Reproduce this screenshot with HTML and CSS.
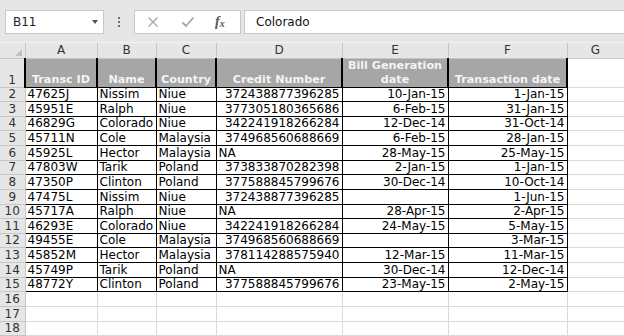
FILE: index.html
```html
<!DOCTYPE html>
<html>
<head>
<meta charset="utf-8">
<link rel="stylesheet" href="styles.css">
</head>
<body>
<div class="app">
  <div class="toolbar">
    <div class="namebox"><span>B11</span><span class="caret"></span></div>
    <div class="dots"><i></i><i></i><i></i></div>
    <div class="fbtns">
      <svg class="ico" width="12" height="12" viewBox="0 0 12 12"><path d="M1.5 1.5 L10.5 10.5 M10.5 1.5 L1.5 10.5" stroke="#a6a6a6" stroke-width="1.3" fill="none"/></svg>
      <svg class="ico" width="14" height="12" viewBox="0 0 14 12"><path d="M1.5 6.5 L5 10 L12.5 1.5" stroke="#a6a6a6" stroke-width="1.8" fill="none"/></svg>
      <span class="fx">f<sub>x</sub></span>
    </div>
    <div class="finput">Colorado</div>
  </div>
  <table class="sheet">
    <colgroup>
      <col class="c-rn"><col class="c-a"><col class="c-b"><col class="c-c"><col class="c-d"><col class="c-e"><col class="c-f"><col class="c-g">
    </colgroup>
    <tr class="colhead">
      <th class="corner"><span class="tri"></span></th><th>A</th><th>B</th><th>C</th><th>D</th><th>E</th><th>F</th><th>G</th>
    </tr>
    <tr class="r-head">
      <td class="rn">1</td><td class="h">Transc ID</td><td class="h">Name</td><td class="h">Country</td><td class="h">Credit Number</td><td class="h">Bill Generation date</td><td class="h">Transaction date</td><td></td>
    </tr>
    <tr><td class="rn">2</td><td class="b">47625J</td><td class="b">Nissim</td><td class="b">Niue</td><td class="b r">372438877396285</td><td class="b r">10-Jan-15</td><td class="b r">1-Jan-15</td><td></td></tr>
    <tr><td class="rn">3</td><td class="b">45951E</td><td class="b">Ralph</td><td class="b">Niue</td><td class="b r">377305180365686</td><td class="b r">6-Feb-15</td><td class="b r">31-Jan-15</td><td></td></tr>
    <tr><td class="rn">4</td><td class="b">46829G</td><td class="b">Colorado</td><td class="b">Niue</td><td class="b r">342241918266284</td><td class="b r">12-Dec-14</td><td class="b r">31-Oct-14</td><td></td></tr>
    <tr><td class="rn">5</td><td class="b">45711N</td><td class="b">Cole</td><td class="b">Malaysia</td><td class="b r">374968560688669</td><td class="b r">6-Feb-15</td><td class="b r">28-Jan-15</td><td></td></tr>
    <tr><td class="rn">6</td><td class="b">45925L</td><td class="b">Hector</td><td class="b">Malaysia</td><td class="b">NA</td><td class="b r">28-May-15</td><td class="b r">25-May-15</td><td></td></tr>
    <tr><td class="rn">7</td><td class="b">47803W</td><td class="b">Tarik</td><td class="b">Poland</td><td class="b r">373833870282398</td><td class="b r">2-Jan-15</td><td class="b r">1-Jan-15</td><td></td></tr>
    <tr><td class="rn">8</td><td class="b">47350P</td><td class="b">Clinton</td><td class="b">Poland</td><td class="b r">377588845799676</td><td class="b r">30-Dec-14</td><td class="b r">10-Oct-14</td><td></td></tr>
    <tr><td class="rn">9</td><td class="b">47475L</td><td class="b">Nissim</td><td class="b">Niue</td><td class="b r">372438877396285</td><td class="b r"></td><td class="b r">1-Jun-15</td><td></td></tr>
    <tr><td class="rn">10</td><td class="b">45717A</td><td class="b">Ralph</td><td class="b">Niue</td><td class="b">NA</td><td class="b r">28-Apr-15</td><td class="b r">2-Apr-15</td><td></td></tr>
    <tr><td class="rn">11</td><td class="b">46293E</td><td class="b">Colorado</td><td class="b">Niue</td><td class="b r">342241918266284</td><td class="b r">24-May-15</td><td class="b r">5-May-15</td><td></td></tr>
    <tr><td class="rn">12</td><td class="b">49455E</td><td class="b">Cole</td><td class="b">Malaysia</td><td class="b r">374968560688669</td><td class="b r"></td><td class="b r">3-Mar-15</td><td></td></tr>
    <tr><td class="rn">13</td><td class="b">45852M</td><td class="b">Hector</td><td class="b">Malaysia</td><td class="b r">378114288575940</td><td class="b r">12-Mar-15</td><td class="b r">11-Mar-15</td><td></td></tr>
    <tr><td class="rn">14</td><td class="b">45749P</td><td class="b">Tarik</td><td class="b">Poland</td><td class="b">NA</td><td class="b r">30-Dec-14</td><td class="b r">12-Dec-14</td><td></td></tr>
    <tr><td class="rn">15</td><td class="b">48772Y</td><td class="b">Clinton</td><td class="b">Poland</td><td class="b r">377588845799676</td><td class="b r">23-May-15</td><td class="b r">2-May-15</td><td></td></tr>
    <tr><td class="rn">16</td><td></td><td></td><td></td><td></td><td></td><td></td><td></td></tr>
    <tr><td class="rn">17</td><td></td><td></td><td></td><td></td><td></td><td></td><td></td></tr>
    <tr><td class="rn">18</td><td></td><td></td><td></td><td></td><td></td><td></td><td></td></tr>
  </table>
</div>
</body>
</html>
```

FILE: styles.css
```css
html, body {
  margin: 0;
  padding: 0;
  background: #ffffff;
  overflow: hidden;
}
.app {
  width: 624px;
  height: 336px;
  overflow: hidden;
  font-family: "DejaVu Sans", Verdana, sans-serif;
  font-size: 12px;
  color: #000;
}
.toolbar {
  height: 43px;
  background: #e6e6e6;
  display: flex;
  align-items: flex-start;
  padding-top: 10px;
  box-sizing: border-box;
  border-bottom: 1px solid #f2f2f2;
}
.namebox {
  margin-left: 5px;
  width: 99px;
  height: 24px;
  box-sizing: border-box;
  background: #fff;
  border: 1px solid #c8c8c8;
  display: flex;
  align-items: center;
  justify-content: space-between;
  padding: 0 5px 0 7px;
  font-size: 12px;
  color: #222;
}
.caret {
  width: 0;
  height: 0;
  border-left: 3.5px solid transparent;
  border-right: 3.5px solid transparent;
  border-top: 4px solid #555;
}
.dots {
  width: 30px;
  height: 24px;
  display: flex;
  flex-direction: column;
  align-items: center;
  justify-content: center;
  gap: 2px;
}
.dots i {
  display: block;
  width: 2px;
  height: 2px;
  background: #6f6f6f;
}
.fbtns {
  width: 107px;
  height: 24px;
  box-sizing: border-box;
  background: #fff;
  border: 1px solid #c8c8c8;
  display: flex;
  align-items: center;
  padding-left: 12px;
  gap: 0;
}
.fbtns .ico:first-child { margin-right: 22px; }
.fbtns .ico:nth-child(2) { margin-right: 20px; }
.fx {
  font-family: "Liberation Serif", serif;
  font-style: italic;
  font-size: 14px;
  color: #555;
  font-weight: bold;
  line-height: 1;
}
.fx sub {
  font-size: 10px;
  vertical-align: baseline;
  position: relative;
  top: 1px;
}
.finput {
  margin-left: 3px;
  flex: 1;
  height: 24px;
  box-sizing: border-box;
  background: #fff;
  border: 1px solid #c8c8c8;
  border-right: none;
  padding-left: 11px;
  display: flex;
  align-items: center;
  font-size: 12px;
  color: #111;
}
.sheet {
  border-collapse: collapse;
  table-layout: fixed;
  width: 624px;
}
.c-rn { width: 25px; }
.c-a { width: 72px; }
.c-b { width: 59px; }
.c-c { width: 60px; }
.c-d { width: 126px; }
.c-e { width: 106px; }
.c-f { width: 119px; }
.c-g { width: 57px; }
.sheet td, .sheet th {
  padding: 0 2px;
  border: 1px solid #dadada;
  white-space: nowrap;
  overflow: hidden;
  line-height: 13px;
  vertical-align: bottom;
  text-align: left;
  font-weight: normal;
}
.sheet tr { height: 14.64px; }
.colhead { height: 15px !important; }
.colhead th {
  background: #e6e6e6;
  color: #333;
  text-align: center;
  border-color: #c6c6c6;
  border-top: none;
  vertical-align: middle;
  font-size: 12px;
}
.colhead th.corner {
  position: relative;
  border-left: none;
}
.tri {
  position: absolute;
  right: 3px;
  bottom: 2px;
  width: 0;
  height: 0;
  border-left: 7px solid transparent;
  border-bottom: 7px solid #c0c0c0;
}
.sheet td.rn {
  background: #e6e6e6;
  color: #333;
  text-align: center;
  border-color: #c6c6c6;
  border-left: none;
  padding: 0;
}
.r-head { height: 29px !important; }
.sheet td.h {
  background: #a6a6a6;
  color: #f4f4f4;
  font-weight: bold;
  font-size: 11.2px;
  text-align: center;
  white-space: normal;
  line-height: 14px;
  border: 1px solid #000;
  border-left: 2px solid #000;
  border-right: 2px solid #000;
  border-top-color: #c6c6c6;
}
.sheet td.b {
  border: 1px solid #000;
}
.sheet td.r { text-align: right; }
```
